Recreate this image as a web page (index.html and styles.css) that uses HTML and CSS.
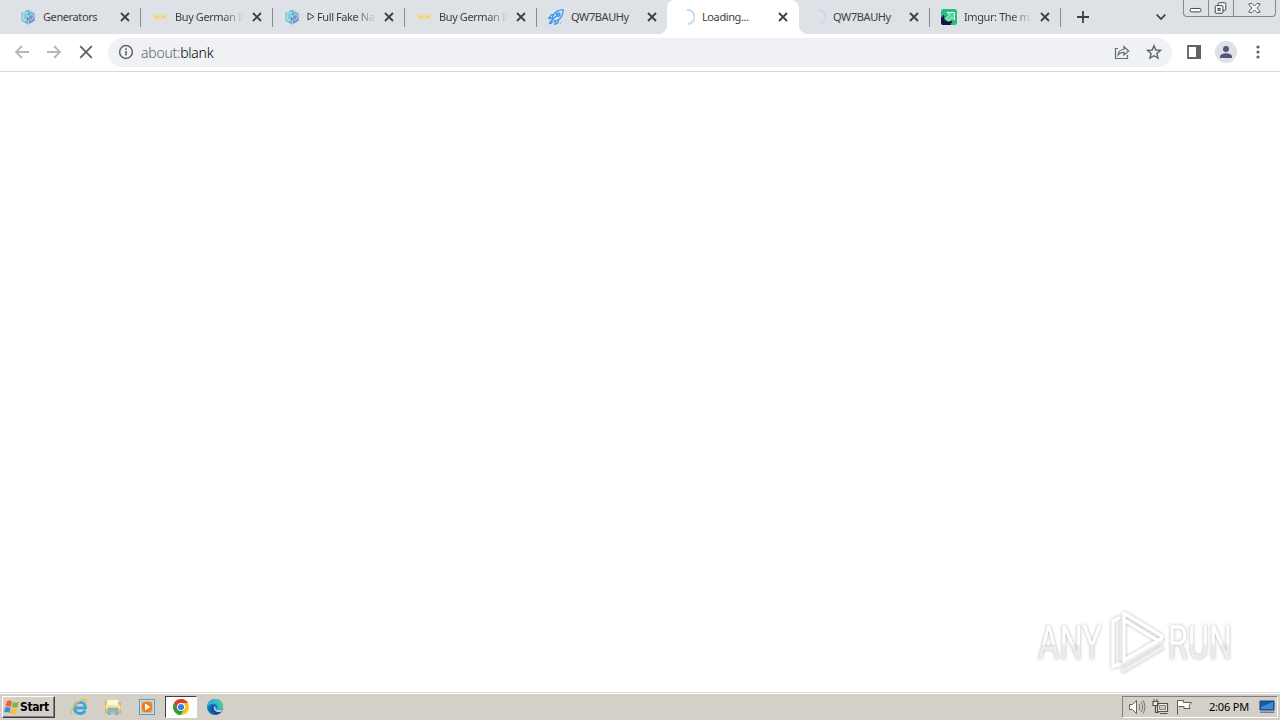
FILE: index.html
```html
<!DOCTYPE html>
<html lang="en">
<head>
  <meta charset="UTF-8">
  <title>about:blank</title>
  <link rel="stylesheet" href="styles.css">
</head>
<body>
  <svg width="0" height="0" class="defs">
    <defs>
      <symbol id="close" viewBox="0 0 10 10"><path d="M1 1l8 8M9 1L1 9" fill="none" stroke="#3c4043" stroke-width="1.8"/></symbol>
      <symbol id="cube" viewBox="0 0 16 16">
        <path d="M8 .5l6.5 3.700v7.600L8 15.500l-6.500-3.700V4.200z" fill="#72b5d4"/>
        <path d="M1.500 4.200L8 .5v7.300L4 11l-2.500.8z" fill="#83cad8"/>
        <path d="M8 8l6.500-3.800v7.600L8 15.500z" fill="#7296c6"/>
        <path d="M4 3l5 2-1 5-5 1 1-8m5 2l5 1-2 5-4-1 1-5M4 12l4-2 1 5M9 5l2-3" fill="none" stroke="#c3e6ef" stroke-width=".8"/>
        <circle cx="8" cy="10" r="1.300" fill="#4c88b8"/><circle cx="9" cy="5" r="1.200" fill="#5a9fc8"/>
      </symbol>
      <symbol id="wings" viewBox="0 0 16 16">
        <path d="M1.500 5.500h4L8 6.800l2.500-1.300h4v4h-4L8 9l-2.500 1h-4z" fill="#f2dc8c"/>
        <path d="M3 8h3m4 0h3" stroke="#e8c865"/>
      </symbol>
    </defs>
  </svg>

  <header class="tabstrip">
    <div class="tab wide">
      <svg class="favicon"><use href="#cube"/></svg><span class="title">Generators</span>
      <svg class="close"><use href="#close"/></svg>
    </div>
    <div class="tab wide">
      <svg class="favicon"><use href="#wings"/></svg><span class="title fade">Buy German II</span>
      <svg class="close"><use href="#close"/></svg>
    </div>
    <div class="tab wide">
      <svg class="favicon"><use href="#cube"/></svg><span class="title fade"><svg class="play" viewBox="0 0 8 9"><path d="M1 1l6 3.500L1 8z" fill="none" stroke="#3c4043"/></svg>Full Fake Na</span>
      <svg class="close"><use href="#close"/></svg>
    </div>
    <div class="tab wide">
      <svg class="favicon"><use href="#wings"/></svg><span class="title fade">Buy German II</span>
      <svg class="close"><use href="#close"/></svg>
    </div>
    <div class="tab no-line">
      <svg class="favicon" viewBox="0 0 16 16" fill="none" stroke="#3b94e8" stroke-width="1.3">
        <path d="M15 1c-4-.3-7.500 1-10 6L4 10l2.500 2.300L10 11c4-2.500 5.300-6 5-10z" fill="#cfe4f7"/>
        <path d="M6 5.500L3 6 .8 9.500 4.500 9M10.500 10.500L10 13.500l-3 2 .5-3.500M4 11.500c-1.500.3-2 1.500-2.300 3 1.700-.2 2.800-1 3-2.200M5 10l6-5"/>
        <circle cx="10.300" cy="5.600" r="1.800"/>
        <circle cx="12.500" cy="14" r=".8" fill="#7db8ee" stroke="none"/>
      </svg><span class="title">QW7BAUHy</span>
      <svg class="close"><use href="#close"/></svg>
    </div>
    <div class="tab active">
      <svg class="favicon" viewBox="0 0 16 16"><path d="M8 1a7 7 0 0 1 1 14" fill="none" stroke="#c6daf5" stroke-width="2"/></svg><span class="title">Loading...</span>
      <svg class="close"><use href="#close"/></svg>
    </div>
    <div class="tab">
      <svg class="favicon" viewBox="0 0 16 16"><path d="M8 1a7 7 0 0 1 1 14" fill="none" stroke="#c9d8f0" stroke-width="1.800"/></svg><span class="title">QW7BAUHy</span>
      <svg class="close"><use href="#close"/></svg>
    </div>
    <div class="tab">
      <svg class="favicon" viewBox="0 0 16 16">
        <rect width="16" height="16" rx="2.500" fill="#2bbd7e"/>
        <path d="M0 8c2 0 3 1 3 3l2 2.500h4l1 2.500H2q-2 0-2-2z" fill="#171544"/>
        <path d="M6 3.500h7.500V11L11 8.500 7.500 12 5 9.500l3.500-3.500z" fill="#4fd79a" stroke="#e4faf0" stroke-width="1"/>
        <path d="M3 6.500c-2.500 4 1.500 8.500 8 6.500" fill="none" stroke="#171544" stroke-width="1.900"/>
      </svg><span class="title fade">Imgur: The ma</span>
      <svg class="close"><use href="#close"/></svg>
    </div>
    <svg class="new-tab" viewBox="0 0 12 12"><path d="M6 0v12M0 6h12" stroke="#3c4043" stroke-width="1.800"/></svg>
    <svg class="tab-search" viewBox="0 0 10 6"><path d="M.7.700L5 5 9.300.7" fill="none" stroke="#3c4043" stroke-width="1.700"/></svg>
    <div class="window-buttons">
      <svg viewBox="0 0 25 16"><rect x="6.500" y="8.500" width="11" height="3.500" rx="1" fill="#fff" stroke="#3f424a"/></svg>
      <svg viewBox="0 0 25 16" fill="#f4f5f7" stroke="#3f424a"><rect x="9.500" y="2.500" width="8" height="8" rx="1"/><rect x="6.500" y="5.500" width="8" height="8" rx="1"/><rect x="9.500" y="8.500" width="2" height="2"/></svg>
      <svg class="last" viewBox="0 0 42 16"><path d="M15.500 3.500h3L21 6l2.500-2.500h3V5l-3 3 3 3v1.500h-3L21 10l-2.500 2.500h-3V11l3-3-3-3z" fill="#f7f8fa" stroke="#53565f"/></svg>
    </div>
  </header>

  <nav class="toolbar">
    <svg class="nav-icon" viewBox="0 0 16 16"><path d="M15 8H2m6-6L2 8l6 6" fill="none" stroke="#b5b7ba" stroke-width="1.800"/></svg>
    <svg class="nav-icon" viewBox="0 0 16 16"><path d="M1 8h13M8 2l6 6-6 6" fill="none" stroke="#b5b7ba" stroke-width="1.800"/></svg>
    <svg class="nav-icon" viewBox="0 0 16 16"><path d="M2.200 2.200l11.600 11.600M13.800 2.200L2.200 13.800" stroke="#5f6368" stroke-width="1.900"/></svg>
    <div class="omnibox">
      <svg class="info" viewBox="0 0 16 16"><circle cx="8" cy="8" r="6.400" fill="none" stroke="#5f6368" stroke-width="1.500"/><path d="M8 7v4.500M8 4.200v1.700" stroke="#5f6368" stroke-width="1.600"/></svg>
      <span class="url">about:<b>blank</b></span>
      <svg class="share" viewBox="0 0 16 16"><path d="M4 4.500H1.500v10h12V11M4 11c.5-4 3-5.500 6-5.500V2.700L14.700 7 10 11V8.300C7.500 8.300 5.500 9 4 11z" fill="none" stroke="#666a70" stroke-width="1.200"/></svg>
      <svg class="star" viewBox="0 0 16 16"><path d="M8 1.700l1.800 4.300 4.700.4-3.600 3.100 1.100 4.600L8 11.700l-4 2.400 1.100-4.600L1.500 6.400 6.200 6z" fill="none" stroke="#5f6368" stroke-width="1.400"/></svg>
    </div>
    <svg class="panel" viewBox="0 0 14 14"><path d="M1 1h12v12H1z" fill="#fff" stroke="#5f6368" stroke-width="1.800"/><path d="M9 0h5v14H9z" fill="#5f6368"/></svg>
    <svg class="avatar" viewBox="0 0 22 22"><circle cx="11" cy="11" r="11" fill="#dee1e6"/><circle cx="11" cy="8" r="3" fill="#4f5b76"/><path d="M5 17v-1.500c0-2 4-3.200 6-3.200s6 1.200 6 3.200V17z" fill="#4f5b76"/></svg>
    <svg class="more" viewBox="0 0 4 14"><g fill="#5f6368"><circle cx="2" cy="2" r="1.600"/><circle cx="2" cy="7" r="1.600"/><circle cx="2" cy="12" r="1.600"/></g></svg>
  </nav>

  <main class="page">
    <svg class="watermark" viewBox="0 0 210 72">
      <defs>
        <linearGradient id="fade" x1="0" y1="0" x2="0" y2="1">
          <stop offset=".53" stop-color="#fff"/><stop offset=".54" stop-color="#ededed"/>
        </linearGradient>
      </defs>
      <g class="glow">
        <text x="8" y="55" textLength="64" lengthAdjust="spacingAndGlyphs">ANY</text>
        <text x="138" y="55" textLength="64" lengthAdjust="spacingAndGlyphs">RUN</text>
        <path class="back" d="M87 14v46M88 62l44-25M93 67l39-23"/>
        <path class="outline" d="M94 56V9l38 23M94 16l33 20M89 14l-6 3v46l6-3M94 56l38-22"/>
      </g>
    </svg>
  </main>

  <footer class="taskbar">
    <button class="start">
      <svg viewBox="0 0 16 16"><path d="M3 2q3-1 5 .5L7 8Q4.500 6.500 1.500 7.500z" fill="#ed6335"/><path d="M9 3q3 1 6 0l-1.500 5Q11 9.500 8 8z" fill="#78ba42"/><path d="M1.200 8.500Q4 7.500 6.700 9l-1.500 5Q3 12.500 0 13.500z" fill="#448bd7"/><path d="M7.700 9.200Q10 10.500 13.200 9.500l-1.500 5Q9 15.500 6 14z" fill="#f5bf36"/></svg>Start
    </button>
    <div class="launchers">
      <div class="launcher">
        <svg viewBox="0 0 18 18"><path d="M15 12.500c-2.500 5-11 3.500-10.500-3 .5-7 11-7 11 .5H6" fill="none" stroke="#3aa5df" stroke-width="2.800"/><path d="M2.500 16C-2 15 7 2 14 1.500c3 0 2.500 3 1.500 4.500" fill="none" stroke="#e8bd45" stroke-width="1.300"/></svg>
      </div>
      <div class="launcher">
        <svg viewBox="0 0 18 18"><path d="M1.500 3h5.500l1 2h8.500v10h-15z" fill="#ecc966" stroke="#cba948" stroke-width=".7"/><path d="M3 2h11v5H3z" fill="#fff5cf"/><path d="M1.500 7h15v4h-15z" fill="#f9e49a"/><path d="M4 16.500V11q0-1 1-1h8q1 0 1 1v5.500h-2.500v-3.500h-5v3.500z" fill="#83bde2" stroke="#5e9bc6" stroke-width=".6"/></svg>
      </div>
      <div class="launcher">
        <svg viewBox="0 0 18 18"><rect x="1.500" y="1.500" width="15" height="15" fill="#c4e2f5" stroke="#549dcc"/><rect x="3.500" y="3.500" width="11" height="11" fill="#f5a54e"/><circle cx="9" cy="9" r="5.400" fill="#ef7d1a"/><path d="M7 5.500L12.500 9 7 12.500z" fill="#fff"/></svg>
      </div>
      <div class="launcher running">
        <svg viewBox="0 0 18 18"><circle cx="9" cy="9" r="8" fill="#fbc116"/><path d="M2.100 5A8 8 0 0 1 15.900 5H9l-3.500 6z" fill="#e33b2e"/><path d="M2.100 5A8 8 0 0 0 8.500 17l4-6H5.500z" fill="#269b4b"/><circle cx="9" cy="9" r="4" fill="#fff"/><circle cx="9" cy="9" r="3.100" fill="#367ee9"/></svg>
      </div>
      <div class="launcher">
        <svg viewBox="0 0 18 18"><circle cx="9" cy="9" r="8" fill="#1474bf"/><path d="M1 9C2 3 6 1 9 1c5 0 8 4 8 7 0 4-4 5-6 3.500-1-1 .5-1 .3-3C11 5.500 5 4 1 9z" fill="#36b6d4"/><path d="M9 1c5 0 8 4 8 7 0 2-1.500 3.500-3 4 1-6-2-10-8-10.400z" fill="#4cc795"/><path d="M8 7c-2 4 1 8 7.500 6.500C13 18 5 17.500 4.500 11 4.500 9 6 7.500 8 7z" fill="#104f9e"/><path d="M9.500 8.500c-1 3 2 4.500 6.500 3.300l-1 2C11 15 7 12 8 9z" fill="#d4d0c8"/></svg>
      </div>
    </div>
    <div class="tray">
      <svg class="sound" viewBox="0 0 18 16"><path d="M1.500 5.500h3l4-4v13l-4-4h-3z" fill="#fff" stroke="#66645f"/><path d="M11 5q2 3 0 6M13 3q3.500 5 0 10M15 1.500q4 6.500 0 13" fill="none" stroke="#77746f"/></svg>
      <svg class="network" viewBox="0 0 18 16"><path d="M5.500 4.500h10v8h-10zM8 14.500h7.500M1 2.500h5v4H1zM3.500 6.500v7H7" fill="#eeece8" stroke="#55534f" stroke-width="1.200"/><path d="M7.500 6.500h6v4h-6z" fill="#c9c6c0" stroke="#88857f"/><path d="M2 0v3M5 0v3" stroke="#55534f"/></svg>
      <svg class="flag" viewBox="0 0 18 16"><path d="M1.500 15.500v-14h6v2h8l-2.500 3 1 3H8v-2H2.500" fill="#fff" stroke="#5f5d59"/></svg>
      <span class="clock">2:06 PM</span>
      <svg class="desktop" viewBox="0 0 18 16"><path d="M2 2h14v9H2z" fill="#1c5da9" stroke="#174177"/><path d="M3 8l12-5v7H3z" fill="#3f8dd4"/><path d="M1 12.500h16l-1 1.500H3z" fill="#64829e"/></svg>
    </div>
  </footer>
</body>
</html>
```

FILE: styles.css
```css
* {
  box-sizing: border-box;
}
body {
  margin: 0;
  height: 720px;
  display: flex;
  flex-direction: column;
  overflow: hidden;
  background: #fff;
  font-family: "Noto Sans", "DejaVu Sans", sans-serif;
  font-size: 11px;
  color: #3c4043;
}
svg {
  display: block;
  flex: none;
}
.defs {
  position: absolute;
}

/* tabs */
.tabstrip {
  height: 34px;
  display: flex;
  padding-left: 9px;
  background: #dee1e6;
}
.tab {
  position: relative;
  width: 131px;
  height: 34px;
  flex: none;
  display: flex;
  align-items: center;
  padding: 0 11px;
}
.tab.wide {
  width: 132px;
}
.tab::after {
  content: "";
  position: absolute;
  right: 0;
  top: 8px;
  width: 1px;
  height: 19px;
  background: #86898e;
}
.tab.no-line::after {
  display: none;
}
.tab.active {
  width: 132px;
  margin-left: -1px;
  padding-left: 12px;
  background: #fff;
  border-radius: 8px 8px 0 0;
}
.tab.active::before,
.tab.active::after {
  content: "";
  top: auto;
  bottom: 0;
  width: 8px;
  height: 8px;
}
.tab.active::before {
  position: absolute;
  left: -8px;
  background: radial-gradient(circle at 0 0, #dee1e6 7.5px, #fff 8px);
}
.tab.active::after {
  right: -8px;
  background: radial-gradient(circle at 100% 0, #dee1e6 7.5px, #fff 8px);
}
.favicon {
  width: 16px;
  height: 16px;
  margin-right: 7px;
}
.title {
  flex: 1;
  min-width: 0;
  display: flex;
  align-items: center;
  white-space: nowrap;
  letter-spacing: -0.4px;
  padding-bottom: 2px;
  margin-right: 8px;
}
.fade {
  -webkit-mask-image: linear-gradient(90deg, #000 70%, transparent);
  mask-image: linear-gradient(90deg, #000 70%, transparent);
}
.play {
  width: 8px;
  height: 9px;
  margin-right: 2px;
}
.close {
  width: 10px;
  height: 10px;
}
.new-tab {
  width: 12px;
  height: 12px;
  margin: 11px 0 0 16px;
}
.tab-search {
  width: 10px;
  height: 6px;
  margin: 14px 0 0 67px;
}
.window-buttons {
  display: flex;
  height: 17px;
  margin-left: 17px;
  border: 1px solid #85888f;
  border-top: 0;
  border-radius: 0 0 4px 4px;
}
.window-buttons svg {
  width: 25px;
  height: 16px;
  border-right: 1px solid #85888f;
}
.window-buttons .last {
  width: 41px;
  border-right: 0;
}

/* toolbar */
.toolbar {
  height: 38px;
  display: flex;
  align-items: center;
  padding: 0 20px 1px 14px;
  border-bottom: 1px solid #d5d7da;
}
.nav-icon {
  width: 16px;
  height: 16px;
  margin-right: 16px;
}
.omnibox {
  width: 1064px;
  height: 29px;
  margin: 1px 0 0 -2px;
  padding: 0 10px 1px;
  display: flex;
  align-items: center;
  border-radius: 15px;
  background: #eff1f4;
}
.info {
  width: 16px;
  height: 16px;
}
.url {
  flex: 1;
  margin-left: 7px;
  padding-top: 1px;
  font-size: 14px;
  font-weight: 300;
  letter-spacing: -0.25px;
  color: #5f6368;
}
.url b {
  font-weight: 300;
  color: #000;
}
.share,
.star {
  width: 16px;
  height: 16px;
}
.star {
  margin-left: 16px;
}
.panel {
  width: 14px;
  height: 14px;
  margin-left: 15px;
}
.avatar {
  width: 22px;
  height: 22px;
  margin-left: 14px;
}
.more {
  width: 4px;
  height: 14px;
  margin-left: 19px;
}

/* page */
.page {
  flex: 1;
  display: flex;
  justify-content: flex-end;
  align-items: flex-end;
  padding: 0 40px 16px 0;
}
.watermark {
  width: 210px;
  height: 72px;
}
.watermark text {
  font-family: Roboto, sans-serif;
  font-size: 49px;
  fill: url(#fade);
}
.glow {
  filter: drop-shadow(0 0 1.8px rgba(0, 0, 0, 0.3));
}
.outline,
.back {
  fill: none;
  stroke: #fff;
  stroke-width: 3.5;
  stroke-linecap: round;
  stroke-linejoin: round;
}
.back {
  stroke: #f0f0f0;
}

/* taskbar */
.taskbar {
  height: 28px;
  display: flex;
  align-items: center;
  padding: 1px 2px 0;
  background: #d4d0c8;
  border-top: 1px solid #dedbd5;
  box-shadow: inset 0 1px #fff;
}
.start {
  width: 53px;
  height: 22px;
  padding: 0 1px;
  display: flex;
  align-items: center;
  border: 1px solid;
  border-color: #fff #404040 #404040 #fff;
  box-shadow: inset -1px -1px #808080;
  background: #d4d0c8;
  font: bold 12px "DejaVu Sans Condensed", "DejaVu Sans", sans-serif;
  letter-spacing: -0.4px;
  color: #000;
}
.start svg {
  width: 16px;
  height: 16px;
}
.launchers {
  display: flex;
  gap: 2px;
  margin-left: 8px;
}
.launcher {
  width: 32px;
  height: 22px;
  display: flex;
  align-items: center;
  justify-content: center;
}
.launcher svg {
  width: 18px;
  height: 18px;
}
.running {
  background: #fff;
  border: 1px solid;
  border-color: #404040 #fff #fff #404040;
}
.tray {
  width: 156px;
  height: 22px;
  margin-left: auto;
  padding: 0 0 0 5px;
  display: flex;
  align-items: center;
  border: 1px solid;
  border-color: #808080 #fff #fff #808080;
  color: #000;
}
.sound,
.network,
.flag,
.desktop {
  width: 18px;
  height: 16px;
}
.network,
.flag {
  margin-left: 6px;
}
.clock {
  width: 44px;
  margin-left: 15px;
  padding-bottom: 1px;
  white-space: nowrap;
  letter-spacing: -0.2px;
}
.desktop {
  margin-left: 5px;
}
```
